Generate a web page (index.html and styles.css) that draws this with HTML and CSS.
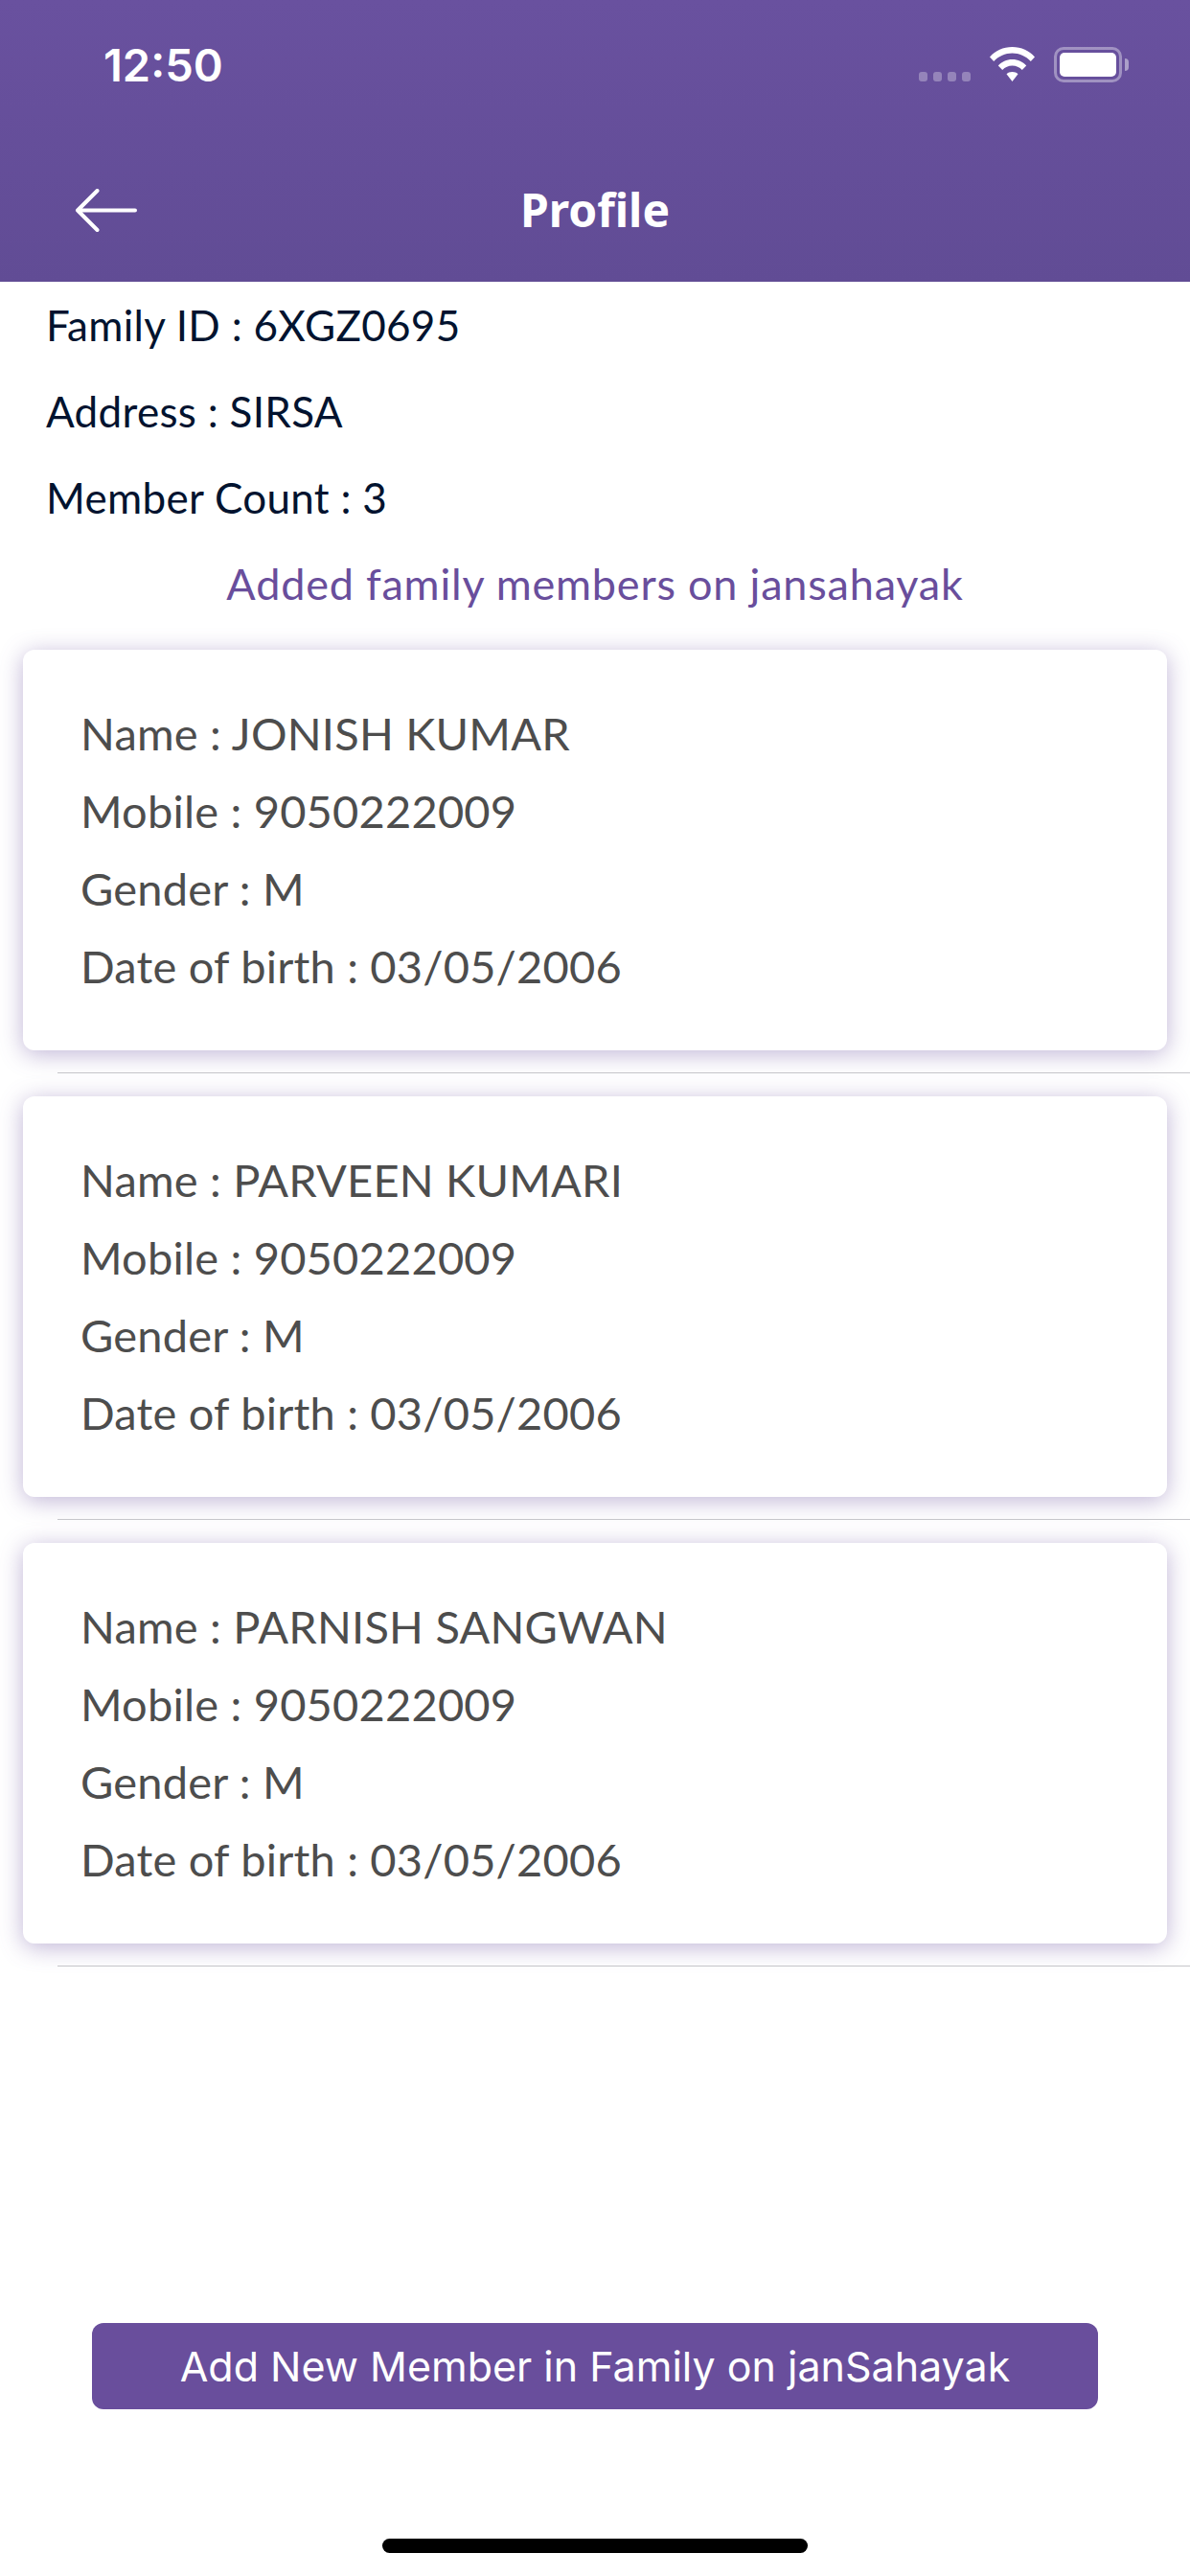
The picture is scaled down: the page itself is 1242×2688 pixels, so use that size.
FILE: index.html
```html
<!DOCTYPE html>
<html lang="en">
<head>
    <meta charset="UTF-8">
    <title>Profile</title>
    <link rel="stylesheet" href="styles.css">
</head>
<body>
    <div class="page">
        <header class="header">
            <div class="status-bar">
                <span class="time">12:50</span>
                <div class="status-icons">
                    <div class="signal">
                        <span></span><span></span><span></span><span></span>
                    </div>
                    <svg class="wifi" width="47" height="36" viewBox="0 0 47 36">
                        <path d="M0 10.5C6 3.800 14 0 23.500 0S41 3.800 47 10.500L42.800 15C37.500 9.500 31 6.500 23.500 6.500S9.500 9.500 4.200 15Z" fill="#fff"/>
                        <path d="M8.800 19.500C12.500 15.500 17.500 13 23.500 13S34.500 15.500 38.200 19.500L33.800 24C31 21.200 27.500 19.500 23.500 19.500S16 21.200 13.200 24Z" fill="#fff"/>
                        <path d="M17.500 28.300C19 26.800 21 26 23.500 26S28 26.800 29.500 28.300L23.500 36Z" fill="#fff"/>
                    </svg>
                    <div class="battery">
                        <div class="battery-body"><div class="battery-level"></div></div>
                        <div class="battery-cap"></div>
                    </div>
                </div>
            </div>
            <div class="nav-bar">
                <svg class="back" width="66" height="46" viewBox="0 0 66 46">
                    <path d="M63 22.500H3M23.500 2L3 22.500L23.500 43" fill="none" stroke="#fff" stroke-width="4" stroke-linecap="round" stroke-linejoin="round"/>
                </svg>
                <h1 class="title">Profile</h1>
            </div>
        </header>

        <section class="info">
            <p class="info-row">Family ID : 6XGZ0695</p>
            <p class="info-row">Address : SIRSA</p>
            <p class="info-row">Member Count : 3</p>
            <p class="info-link">Added family members on jansahayak</p>
        </section>

        <div class="members">
            <div class="member">
                <div class="card">
                    <p>Name : JONISH KUMAR</p>
                    <p>Mobile : 9050222009</p>
                    <p>Gender : M</p>
                    <p>Date of birth : 03/05/2006</p>
                </div>
                <div class="divider"></div>
            </div>
            <div class="member">
                <div class="card">
                    <p>Name : PARVEEN KUMARI</p>
                    <p>Mobile : 9050222009</p>
                    <p>Gender : M</p>
                    <p>Date of birth : 03/05/2006</p>
                </div>
                <div class="divider"></div>
            </div>
            <div class="member">
                <div class="card">
                    <p>Name : PARNISH SANGWAN</p>
                    <p>Mobile : 9050222009</p>
                    <p>Gender : M</p>
                    <p>Date of birth : 03/05/2006</p>
                </div>
                <div class="divider"></div>
            </div>
        </div>

        <div class="footer">
            <button class="add-button">Add New Member in Family on janSahayak</button>
            <div class="home-indicator"></div>
        </div>
    </div>
</body>
</html>
```
FILE: styles.css
```css
body {
    margin: 0;
    background-color: #fff;
    font-family: "Lato", "Noto Sans", sans-serif;
}

p {
    margin: 0;
}

.page {
    display: flex;
    flex-direction: column;
    width: 1242px;
    height: 2688px;
    overflow: hidden;
}

.header {
    display: flex;
    flex-direction: column;
    height: 294px;
    background: linear-gradient(#69519f, #614c95);
    color: #fff;
}

.status-bar {
    display: flex;
    justify-content: space-between;
    align-items: flex-start;
    height: 172px;
    padding: 49px 64px 0 108px;
    box-sizing: border-box;
}

.time {
    font-family: "Inter", sans-serif;
    font-size: 47px;
    font-weight: 600;
    line-height: 38px;
}

.status-icons {
    display: flex;
    align-items: flex-start;
}

.signal {
    display: flex;
    gap: 6px;
    margin: 26px 20px 0 0;
}

.signal span {
    width: 9px;
    height: 10px;
    border-radius: 3px;
    background-color: rgba(255, 255, 255, 0.3);
}

.battery {
    display: flex;
    align-items: center;
    margin-left: 20px;
}

.battery-body {
    width: 71px;
    height: 37px;
    box-sizing: border-box;
    padding: 3px;
    border: 3px solid rgba(255, 255, 255, 0.38);
    border-radius: 10px;
}

.battery-level {
    height: 100%;
    border-radius: 5px;
    background-color: #fff;
}

.battery-cap {
    width: 4px;
    height: 13px;
    margin-left: 3px;
    border-radius: 0 4px 4px 0;
    background-color: rgba(255, 255, 255, 0.45);
}

.nav-bar {
    position: relative;
    display: flex;
    justify-content: center;
    align-items: center;
    height: 94px;
}

.back {
    position: absolute;
    left: 78px;
    top: 25px;
}

.title {
    margin: 0;
    font-family: "Noto Sans", sans-serif;
    font-size: 48px;
    font-weight: 700;
    line-height: 94px;
}

.info {
    padding: 0 48px;
    color: #02132f;
    font-size: 44px;
    letter-spacing: 0.3px;
}

.info-row {
    height: 90px;
    line-height: 90px;
}

.info-link {
    height: 90px;
    line-height: 90px;
    text-align: center;
    color: #694e9c;
    font-size: 45px;
    letter-spacing: 0.8px;
}

.members {
    margin-top: 24px;
}

.member {
    margin-bottom: 24px;
}

.card {
    height: 418px;
    box-sizing: border-box;
    margin: 0 24px;
    padding: 47px 60px 0;
    border-radius: 12px;
    background-color: #fff;
    box-shadow: 0 4px 24px rgba(104, 78, 157, 0.42);
    color: #4d4d4d;
    font-size: 47px;
    line-height: 81px;
    letter-spacing: 0.2px;
}

.divider {
    height: 1px;
    margin: 23px 0 0 60px;
    background-color: #c6c6ca;
}

.footer {
    display: flex;
    flex-direction: column;
    align-items: center;
    margin-top: auto;
    padding-bottom: 24px;
}

.add-button {
    width: 1050px;
    height: 90px;
    padding: 0;
    border: none;
    border-radius: 12px;
    background-color: #694e9c;
    color: #fff;
    font-family: "Inter", sans-serif;
    font-size: 43px;
}

.home-indicator {
    width: 444px;
    height: 15px;
    margin-top: 135px;
    border-radius: 8px;
    background-color: #000;
}
```
